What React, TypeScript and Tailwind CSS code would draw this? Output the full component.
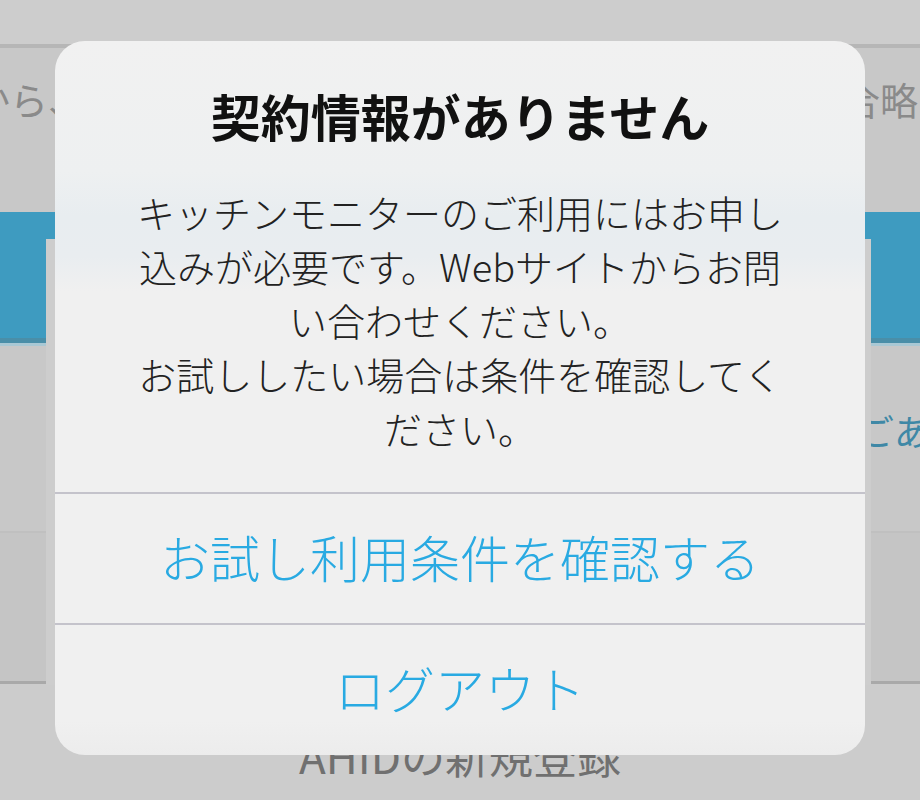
export default function App() {
    return (
        <div className="relative w-[920px] h-[800px] overflow-hidden bg-[#cccccc] font-['Noto_Sans_CJK_JP',sans-serif]">
            {/* page behind the alert */}
            <div className="h-[44px] bg-[#cdcdcd]" />
            <div className="h-[4px] bg-[#b6b6b6]" />
            <div className="h-[164px] bg-[#c8c8c8] flex items-start pt-[24px] text-[38px] leading-[54px] text-[#8a8a8a]">
                <div className="w-[86px] flex justify-end overflow-hidden whitespace-nowrap">レシピから、</div>
                <div className="ml-auto w-[78px] overflow-hidden whitespace-nowrap">合略</div>
            </div>
            <div className="h-[134px] bg-[#3e9bc0] flex flex-col justify-end">
                <div className="h-[5px] bg-[#4a8ea8]" />
                <div className="h-[3px] bg-[#a9c8d4]" />
            </div>
            <div className="h-[185px] bg-[#c8c8c8] pt-[57px] flex justify-end text-[36px] leading-[54px] text-[#3f88a6]">
                <div className="w-[62px] overflow-hidden whitespace-nowrap">ごあ</div>
            </div>
            <div className="h-[2px] bg-[#c0c0c0]" />
            <div className="h-[148px] bg-[#c5c5c5]" />
            <div className="h-[3px] bg-[#a9a9a9]" />
            <div className="pt-[44px] text-center text-[44px] leading-[54px] text-[#707070]">AHIDの新規登録</div>

            <div className="absolute left-[46px] top-[239px] w-[825px] h-[446px] bg-[#cdcdcd]" />

            {/* alert */}
            <div className="absolute left-[55px] top-[41px] w-[810px] rounded-[30px] overflow-hidden bg-[linear-gradient(to_bottom,#f1f1f1_0px,#eef0f1_130px,#e8edf0_175px,#e9edf0_215px,#f0f0f0_250px,#f0f0f0_680px,#ececec_714px)]">
                <div className="pt-[44px] pb-[37px] px-[40px] text-center">
                    <h1 className="text-[50px] leading-[60px] font-bold text-[#111111]">契約情報がありません</h1>
                    <p className="mt-[40px] text-[38px] leading-[54px] font-light text-[#222222]">
                        キッチンモニターのご利用にはお申し
                        <br />
                        込みが必要です。Webサイトからお問
                        <br />
                        い合わせください。
                        <br />
                        お試ししたい場合は条件を確認してく
                        <br />
                        ださい。
                    </p>
                </div>
                <div className="h-[2px] bg-[#c4c3cb]" />
                <button className="w-full h-[129px] pb-[6px] flex items-center justify-center text-[50px] leading-[60px] font-light text-[#29aae2]">
                    お試し利用条件を確認する
                </button>
                <div className="h-[2px] bg-[#c4c3cb]" />
                <button className="w-full h-[130px] pb-[6px] flex items-center justify-center text-[50px] leading-[60px] font-light text-[#29aae2]">
                    ログアウト
                </button>
            </div>
        </div>
    );
}
